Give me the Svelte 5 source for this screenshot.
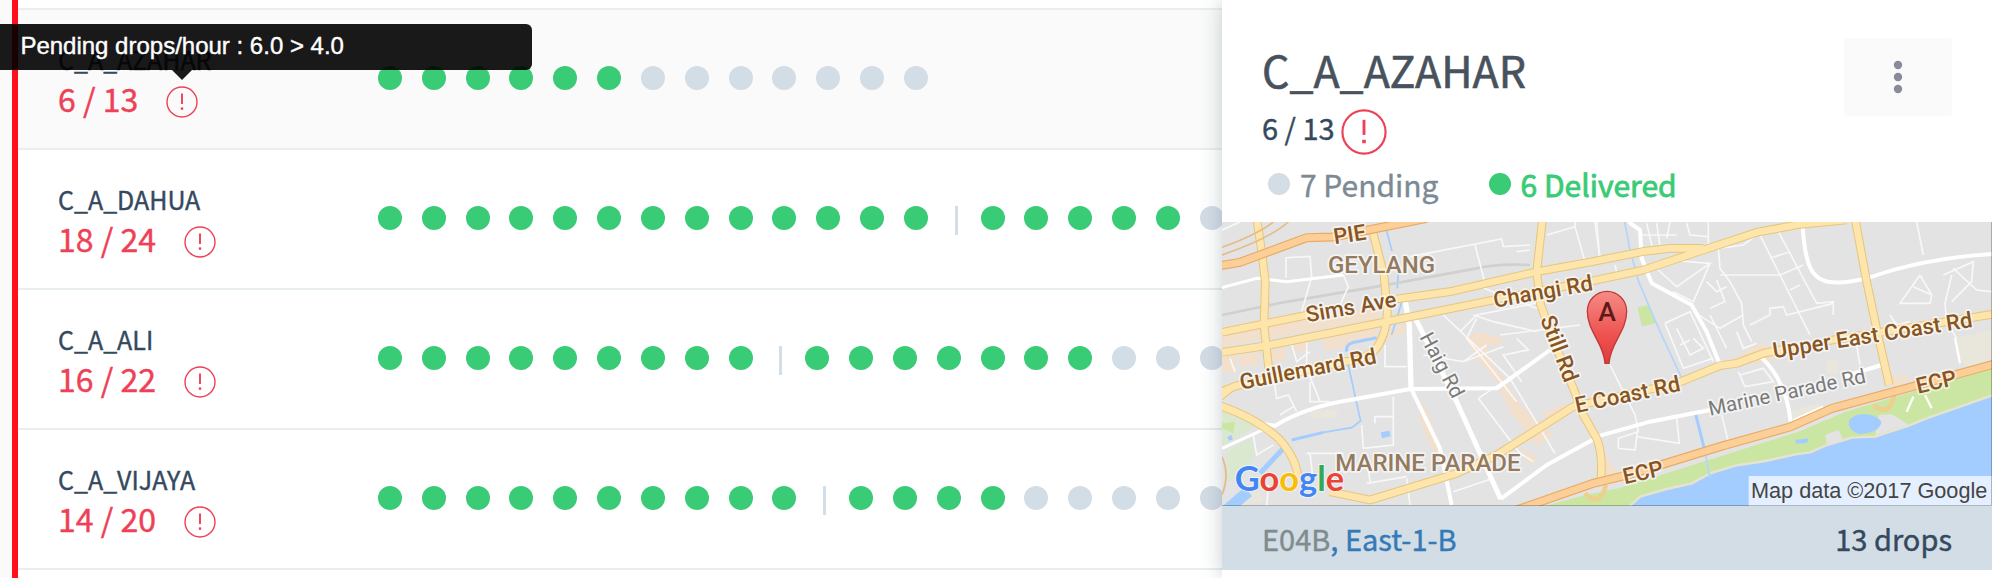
<script>
  const routes = [
    { name: 'C_A_AZAHAR', done: 6, total: 13, groups: [13], tip: 'Pending drops/hour : 6.0 > 4.0' },
    { name: 'C_A_DAHUA', done: 18, total: 24, groups: [13, 11] },
    { name: 'C_A_ALI', done: 16, total: 22, groups: [9, 13] },
    { name: 'C_A_VIJAYA', done: 14, total: 20, groups: [10, 10] }
  ];

  // Flattens a route's groups into dots, with a divider between groups.
  function marks(route) {
    const out = [];
    let n = 0;
    route.groups.forEach((size, g) => {
      if (g > 0) out.push('divider');
      for (let i = 0; i < size; i++) out.push(n++ < route.done ? 'dot done' : 'dot');
    });
    return out;
  }
</script>

{#snippet alertIcon(cls, width)}
  <svg class={cls} viewBox="0 0 32 32" aria-hidden="true" fill="none" stroke="#ee4056" stroke-width={width}>
    <circle cx="16" cy="16" r="15" />
    <path d="M16 7.5V18" stroke-width={width + 0.5} />
    <path d="M16 21.4V23.8" stroke-width={width + 1} />
  </svg>
{/snippet}

<div class="page">
  <main class="list">
    <div class="previous"></div>
    <ul>
      {#each routes as route, i}
        <li class:active={i === 0}>
          <div class="who">
            <div class="name">{route.name}</div>
            <div class="count">
              <span>{route.done} / {route.total}</span>
              <span class="alert">
                {@render alertIcon('small', 1.4)}
                {#if route.tip}<span class="tip" role="tooltip">{route.tip}</span>{/if}
              </span>
            </div>
          </div>
          <div class="track">{#each marks(route) as mark}<i class={mark}></i>{' '}{/each}</div>
        </li>
      {/each}
    </ul>
  </main>

  <aside class="panel">
    <header>
      <div>
        <h1>C_A_AZAHAR</h1>
        <div class="progress"><span>6 / 13</span>{@render alertIcon('large', 1.5)}</div>
        <div class="legend">
          <span class="pending"><i></i>7 Pending</span>
          <span class="delivered"><i></i>6 Delivered</span>
        </div>
      </div>
      <button type="button" aria-label="More">
        <svg viewBox="0 0 10 34" width="10" height="34" fill="#888b9b"><circle cx="5" cy="5" r="4.2" /><circle cx="5" cy="17" r="4.2" /><circle cx="5" cy="29" r="4.2" /></svg>
      </button>
    </header>

    <svg class="map" viewBox="36 21 2310 852">
      <defs>
        <linearGradient id="pin" x1="0" y1="0" x2="0" y2="1">
          <stop offset="0" stop-color="#f58b86" />
          <stop offset="0.6" stop-color="#ee5350" />
          <stop offset="1" stop-color="#e03a3a" />
        </linearGradient>
      </defs>
      <rect x="36" y="21" width="2310" height="852" fill="#e3e3e3" />

      <!-- built-up areas -->
      <g fill="#f2dfcc">
        <path d="M180 335L500 275L510 310L180 370ZM36 360L150 340V370L36 395ZM180 410L228 395V435L190 440ZM340 368L500 340V375L345 408ZM250 385L292 378V408H250ZM525 350L590 330V350L530 372ZM36 425L75 420L80 475L36 470ZM85 420L145 412V450L90 455Z" />
        <path d="M765 365L800 350L880 370L870 390L830 392L845 440L880 490L940 580L1030 660L980 695L940 640L900 590L860 500L800 430ZM640 560L625 600L655 680L680 712L700 710L665 620ZM1000 590L1070 565V610L1010 620ZM930 700L980 725L960 755Z" />
        <path d="M1580 425L1650 385L1690 400V440L1590 450ZM2036 480L2110 490L2050 520ZM1170 700L1225 775L1190 780Z" />
      </g>
      <path fill="#e9e6db" d="M2235 370L2346 345V445L2270 455L2240 420ZM1745 585L1830 565L1820 600L1745 610ZM1850 435H1885V475H1850ZM300 590L380 580V610H300ZM90 840L150 830L160 860L80 873Z" />
      <path fill="#dbe8d0" d="M36 585L145 620L110 650L36 695ZM50 710L120 670L135 720L90 790L50 800Z" />
      <path fill="#cbe6a3" d="M1282 277L1318 270L1338 325L1296 334ZM36 625L75 620L70 655L36 640Z" />

      <!-- coast -->
      <g transform="translate(1146 0)">
        <path fill="#cbe6a3" d="M-140 873L-20 840L80 820L350 735L620 650L760 590L1200 460V873Z" />
        <path fill="#e3e3e3" d="M700 660L740 645L755 680L705 692ZM860 600L900 598L950 630L900 645L850 660Z" />
        <path fill="#a3ccff" stroke="#e8e3d0" stroke-width="7" d="M110 876L145 845L225 822L300 805L355 775L430 752L520 738L610 718L655 712L700 692L780 668L850 665L950 632L1010 608L1210 538V880Z" />
        <path fill="#a3ccff" d="M770 620C780 590 850 590 868 620C865 645 840 655 800 657C780 648 770 640 770 620ZM610 675L650 670L645 684L612 686Z" />
      </g>

      <!-- canals -->
      <g fill="none" stroke="#a3ccff">
        <path stroke-width="5" d="M530 48L546 108M565 170L562 220M575 262L545 360" />
        <path stroke-width="9" d="M500 368L440 380Q405 385 410 410" />
        <path stroke-width="5" d="M415 450L440 565L452 618L425 638L340 652" />
        <path stroke-width="9" d="M340 652L245 675" />
        <path stroke-width="15" d="M225 695L150 775" />
        <path stroke-width="34" d="M115 830L50 885" />
        <path stroke-width="5" stroke="#b3d5fb" d="M1244 21L1260 105L1286 200L1350 350L1425 510M1485 710L1500 790" />
        <path stroke-width="9" d="M1455 590L1485 710" />
      </g>
      <path fill="#a3ccff" d="M512 652L538 647L542 664L516 670ZM52 665L66 660L68 674L56 677Z" />

      <!-- railway -->
      <path fill="none" stroke="#d0d0d0" stroke-width="8" d="M36 300L220 262L500 215L800 160Q860 145 960 150" />

      <!-- lanes -->
      <g fill="none" stroke="#f8f8f8" stroke-width="5">
        <path d="M228 188V128L300 124L305 185L275 290M400 180L415 215L390 270M600 125L875 72L880 95L960 90M795 90L825 205M1010 60L1095 35L1125 140M1095 21V40M1155 21L1170 130M920 110L960 105M36 45L90 21" />
        <path d="M290 380V460L330 560M240 370L260 440L300 410M60 430L75 470M525 390V455H590M640 420L760 440L880 395M190 480L200 550L235 540L260 590M210 600L250 575M300 500V560L360 560M455 630L460 700L550 690V545M495 625V605H550M130 660L140 720L190 690M290 715H400M300 715L310 800M470 805L590 785M475 760L480 800" />
        <path d="M700 300L900 490L1035 715M800 310L770 370L850 470L920 560M760 440L830 390M870 360L1110 330M790 300L850 320L980 350M750 350L800 300L1000 260M920 370L955 405L880 420L935 500M805 550L880 500M805 550L930 715L970 740M590 790L600 870M730 830L850 790M175 810L170 873M800 210L870 240L1010 290" />
        <path d="M1160 21L1170 140M1215 150L1225 195M1200 450L1275 600L1285 650L1225 670V700L1275 705L1282 650M1400 610L1408 685L1280 665M1535 600L1555 680M1380 21L1370 70M1310 25L1330 110M1340 25L1350 95M1290 60H1400M1430 25L1440 60L1495 65M1495 21V95L1400 100" />
        <path d="M1345 165L1400 215L1500 145L1370 135M1500 145L1450 260L1390 230M1525 100L1530 160L1560 200L1595 265L1600 330L1625 380M1525 100L1600 90L1640 60M1530 180H1710M1650 60L1710 180L1800 360M1700 40L1820 265L1870 260V300M1680 130L1740 110M1710 180L1780 150M1740 225L1770 210M1490 200L1520 230L1550 215M1520 195L1545 260L1500 280M1450 290L1530 340L1600 300M1500 300L1550 400M1620 330L1680 300V280L1720 275L1730 300L1870 265" />
        <path d="M1365 325L1440 290L1510 440M1365 325L1420 460L1510 430M1400 340L1440 420L1480 400L1450 370M1410 390L1440 375M1580 350L1600 400L1640 385M1590 480L1660 460L1690 500L1605 515L1585 470M1940 390L1950 450M2120 21L2140 120M2130 180L2070 265L2160 265L2165 240L2110 215M2130 180L2165 240M2225 180L2205 265L2210 320L2240 370M2200 180L2290 140L2285 200L2225 260M2230 160L2300 225L2346 230M2040 300L2060 330L2100 320" />
      </g>

      <!-- streets -->
      <g fill="none" stroke="#fff" stroke-width="12" stroke-linejoin="round">
        <path stroke-width="9" d="M36 218L140 190L230 200L400 180" />
        <path d="M160 628L195 632Q290 575 420 555L600 522L860 520L1020 405" />
        <path stroke-width="16" d="M585 255L598 330L603 520" />
        <path d="M603 520L690 700L725 870" />
        <path stroke-width="15" d="M615 308L740 560L872 852" />
        <path d="M872 852L1010 750L1170 662L1320 620L1500 585M1900 485L2015 450" />
        <path stroke-width="9" d="M36 700L190 630" />
        <path d="M1256 21L1290 45L1295 130L1325 205L1445 270L1490 350L1528 445M1655 428Q1730 500 1742 620" />
        <path d="M1778 35C1785 140 1800 200 1870 202Q1910 205 1980 187Q2140 130 2346 117" />
        <path stroke-width="7" d="M1750 615L1840 575M2090 590L2110 545M2145 540L2165 580M2235 370L2250 445" />
      </g>

      <!-- main roads: casing, then surface -->
      {#each [['#e6c67c', 26], ['#fde5ab', 20]] as [colour, width]}
        <g fill="none" stroke={colour} stroke-width={width} stroke-linejoin="round">
          <path d="M140 10L155 110L166 200L162 330L176 460" />
          <path d="M488 50L522 180L532 290Q528 370 490 410Q450 440 400 440L250 475L80 512L30 532" />
          <path d="M36 352L170 325L340 290M560 252L720 230L980 170L1146 140L1296 110L1380 100L1480 100" />
          <path d="M36 412L170 392L520 322L850 255L1146 198L1300 165L1480 105L1640 52L1770 28L1910 15" />
          <path d="M998 10L980 170L992 270L1040 400L1090 520L1120 600L1160 670Q1180 720 1172 800" />
          <path d="M360 830L480 855L740 775L860 720L1090 575L1220 545L1400 505L1530 452L1580 445L1660 415L1760 395M1850 378L2346 298" />
          <path d="M1935 10L1970 200L2006 370L2038 510" />
          <path d="M30 572Q140 610 205 670Q262 730 266 800" />
          <path d="M30 545L60 520" />
        </g>
      {/each}
      <g fill="none" stroke="#eed08c" stroke-width="14">
        <path d="M1990 570Q2040 610 2052 540M1125 835Q1170 880 1188 810" />
      </g>
      {#each [['#e9ab66', 27], ['#fdcf98', 20]] as [colour, width]}
        <g fill="none" stroke={colour} stroke-width={width} stroke-linejoin="round">
          <path d="M30 152L90 142L290 68L370 66L490 42L650 10" />
          <path d="M920 885L1146 806L1260 778L1540 692L1740 636L1866 580L2096 518L2350 448" />
        </g>
      {/each}
      <g fill="none" stroke="#e6ba88" stroke-width="5">
        <path d="M36 97Q140 60 190 21M36 120Q180 70 235 21M36 725Q60 780 36 840" />
      </g>

      <!-- labels -->
      <g class="road">
        <text transform="translate(374 88) rotate(-9)">PIE</text>
        <text transform="translate(292 322) rotate(-10)">Sims Ave</text>
        <text transform="translate(94 524) rotate(-11)">Guillemard Rd</text>
        <text transform="translate(854 278) rotate(-10)">Changi Rd</text>
        <text transform="translate(990 312) rotate(69)">Still Rd</text>
        <text transform="translate(1100 594) rotate(-12)">E Coast Rd</text>
        <text transform="translate(1692 430) rotate(-9)">Upper East Coast Rd</text>
        <text transform="translate(1244 808) rotate(-13)">ECP</text>
        <text transform="translate(2124 536) rotate(-13)">ECP</text>
      </g>
      <g class="road minor">
        <text transform="translate(628 366) rotate(62)">Haig Rd</text>
        <text transform="translate(1500 602) rotate(-12)">Marine Parade Rd</text>
      </g>
      <g class="area">
        <text x="354" y="173">GEYLANG</text>
        <text x="376" y="769">MARINE PARADE</text>
      </g>

      <path fill="url(#pin)" stroke="#c2393b" stroke-width="4" d="M1185 445C1182 385 1132 350 1132 289A59 60 0 0 1 1250 289C1250 350 1200 385 1197 445Z" />
      <text class="letter" x="1191" y="317">A</text>

      <text class="logo" x="74" y="829"><tspan fill="#4285f4">G</tspan><tspan fill="#ea4335">o</tspan><tspan fill="#fbbc05">o</tspan><tspan fill="#4285f4">g</tspan><tspan fill="#34a853">l</tspan><tspan fill="#ea4335">e</tspan></text>
      <rect x="1616" y="783" width="730" height="90" fill="#fff" fill-opacity="0.7" />
      <text class="credit" x="1623" y="850">Map data ©2017 Google</text>
      <path fill="none" stroke="#000" stroke-opacity="0.25" stroke-width="3" d="M36 871.5H2344.500V21" />
    </svg>

    <div class="zone">
      <span><span class="code">E04B</span><a href="#east">, East-1-B</a></span>
      <span>13 drops</span>
    </div>
  </aside>
</div>

<style>
  :global(body) {
    margin: 0;
    background: #fff;
    color: #34495e;
    font-family: "Noto Sans CJK SC", "Noto Sans", sans-serif;
  }
  .page {
    display: grid;
    grid-template-columns: minmax(0, 1fr) 770px;
    min-height: 100vh;
    background: linear-gradient(90deg, #fafafa 12px, #fff 12px);
  }
  .list {
    margin-left: 12px;
    border-left: 6px solid #ff0f1b;
    min-width: 0;
  }
  ul {
    list-style: none;
    margin: 0;
    padding: 0;
  }
  .previous {
    height: 8px;
    border-bottom: 2px solid #e9eeee;
  }
  li {
    display: grid;
    grid-template-columns: 313px minmax(0, 1fr);
    height: 138px;
    padding-left: 40px;
    border-bottom: 2px solid #e9eeee;
  }
  .active { background: #fafafa; }
  .who,
  .legend,
  .progress,
  .zone {
    -webkit-text-stroke: 0.4px;
  }
  .who { padding-top: 31px; }
  .name {
    font-size: 25px;
    line-height: 36px;
  }
  .count {
    display: flex;
    gap: 28px;
    color: #ee4056;
    font-size: 32px;
    line-height: 42px;
  }
  .alert {
    position: relative;
    height: 32px;
    margin-top: 9px;
  }
  .alert :global(.small) {
    display: block;
    width: 32px;
    height: 32px;
  }
  .tip {
    position: absolute;
    z-index: 2;
    bottom: 48px;
    left: 50%;
    width: 700px;
    height: 46px;
    margin-left: -350px;
    border-radius: 6px;
    background: rgba(0, 0, 0, 0.9);
    color: #fff;
    font: 24px/44px "Liberation Sans", Arial, sans-serif;
    text-align: center;
  }
  .tip::after {
    content: "";
    position: absolute;
    top: 100%;
    left: 50%;
    margin-left: -10px;
    border: 10px solid transparent;
    border-top-color: rgba(0, 0, 0, 0.9);
    border-bottom: 0;
  }
  .track {
    padding-top: 56px;
    overflow: hidden;
    white-space: nowrap;
    font-size: 26px;
    line-height: 30px;
  }
  .dot,
  .divider {
    display: inline-block;
    vertical-align: top;
  }
  .dot {
    width: 24px;
    height: 24px;
    margin: 0 7px;
    border-radius: 50%;
    background: #d3dde6;
  }
  .done { background: #39cb75; }
  .divider {
    width: 3px;
    height: 29px;
    margin: 0 10px 0 14px;
    background: #d3dfe8;
  }

  .panel {
    position: relative;
    background: #fff;
    box-shadow: 0 0 20px rgba(47, 64, 80, 0.26);
    font-size: 29px;
  }
  header {
    display: flex;
    justify-content: space-between;
    align-items: flex-start;
    padding: 38px 40px 9px;
  }
  h1 {
    margin: 0;
    color: #48525d;
    font-size: 43px;
    font-weight: 400;
    line-height: 62px;
    -webkit-text-stroke: 0.6px;
  }
  .progress {
    display: flex;
    align-items: flex-end;
    gap: 6px;
    line-height: 55px;
  }
  .progress :global(.large) {
    width: 46px;
    height: 46px;
  }
  .legend {
    display: flex;
    gap: 50px;
    padding-left: 6px;
    font-size: 30px;
    line-height: 58px;
  }
  .legend span {
    display: flex;
    align-items: center;
    gap: 10px;
    color: #7c8a95;
  }
  .legend i {
    width: 22px;
    height: 22px;
    border-radius: 50%;
    background: #d3dde6;
  }
  .legend .delivered {
    color: #39cb75;
    -webkit-text-stroke: 0.8px;
  }
  .legend .delivered i { background: #39cb75; }
  button {
    display: grid;
    place-items: center;
    width: 108px;
    height: 78px;
    padding: 0;
    border: 0;
    border-radius: 4px;
    background: #fafafa;
  }
  .map {
    display: block;
    width: 100%;
    font-family: Roboto, sans-serif;
  }
  .road text,
  .area text {
    paint-order: stroke;
    stroke: #fff;
    stroke-opacity: 0.6;
    stroke-width: 11px;
    stroke-linejoin: round;
  }
  .road {
    fill: #875424;
    font-size: 66px;
    font-weight: 500;
  }
  .minor {
    fill: #7a7a7a;
    font-size: 61px;
    font-weight: 400;
  }
  .area {
    fill: #947a5e;
    font-size: 72px;
    font-weight: 500;
  }
  .letter {
    fill: #5e1a1a;
    font-size: 80px;
    font-weight: 500;
    text-anchor: middle;
  }
  .logo {
    font-family: Lato, sans-serif;
    font-size: 103px;
    font-weight: 700;
    paint-order: stroke;
    stroke: #fff;
    stroke-opacity: 0.6;
    stroke-width: 6px;
  }
  .credit {
    fill: #444;
    font-family: "Liberation Sans", Arial, sans-serif;
    font-size: 65px;
  }
  .zone {
    display: flex;
    justify-content: space-between;
    padding: 0 40px;
    background: #d3dde5;
    line-height: 64px;
  }
  .code { color: #7f8c8d; }
  a {
    color: #337ab7;
    text-decoration: none;
  }
</style>
